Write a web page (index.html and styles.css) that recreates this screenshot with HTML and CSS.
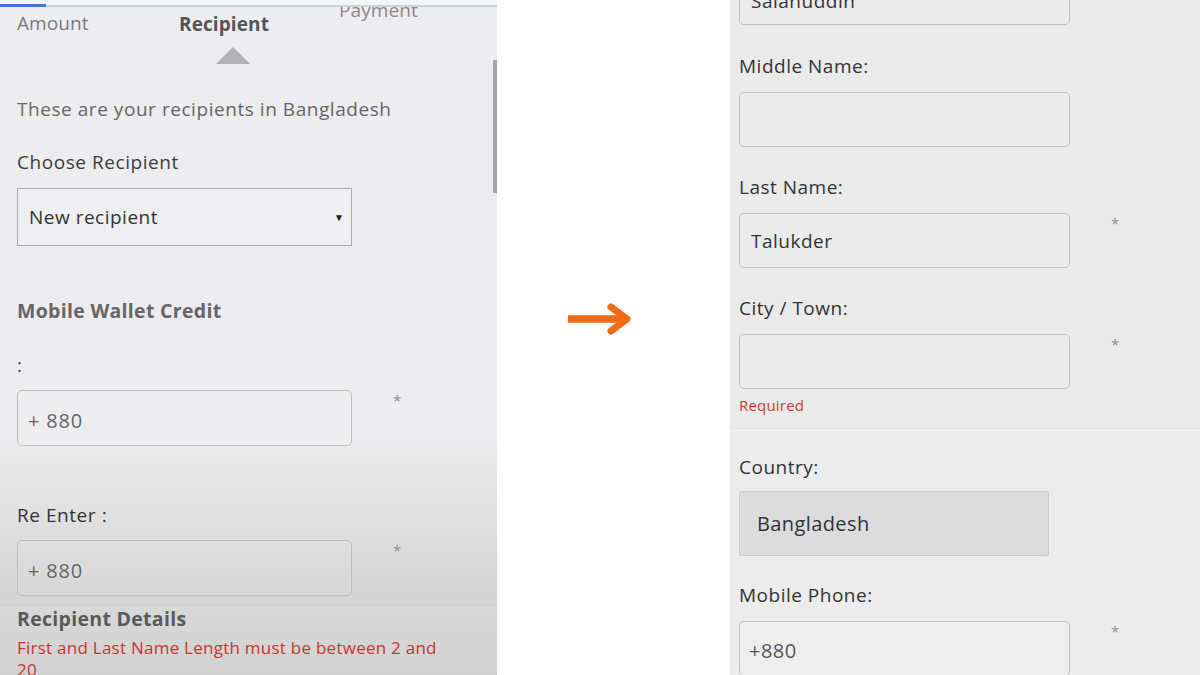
FILE: index.html
```html
<!DOCTYPE html>
<html lang="en">
<head>
<meta charset="utf-8">
<title>Recipient form</title>
<link rel="stylesheet" href="styles.css">
</head>
<body>
<div class="canvas">
  <section class="left">
    <div class="topbar"><span class="indicator"></span></div>
    <div class="tabs">
      <span class="tab tab-amount">Amount</span>
      <span class="tab tab-recipient">Recipient</span>
      <span class="tab tab-payment">Payment</span>
    </div>
    <div class="pointer-row"><span class="pointer"></span></div>
    <div class="scrollbar"></div>
    <div class="form-left">
      <p class="intro">These are your recipients in Bangladesh</p>
      <p class="label">Choose Recipient</p>
      <div class="select"><span>New recipient</span><span class="caret">▼</span></div>
      <p class="heading heading-wallet">Mobile Wallet Credit</p>
      <p class="label colon">:</p>
      <div class="field-row">
        <div class="input-l">+ 880</div><span class="star">*</span>
      </div>
      <p class="label reenter">Re Enter :</p>
      <div class="field-row">
        <div class="input-l">+ 880</div><span class="star">*</span>
      </div>
    </div>
    <div class="details">
      <p class="heading">Recipient Details</p>
      <p class="error-l">First and Last Name Length must be between 2 and 20</p>
    </div>
  </section>

  <div class="middle">
    <svg class="arrow" width="72" height="36" viewBox="0 0 72 36" aria-hidden="true">
      <path d="M5 18 H62" stroke="#f26a12" stroke-width="7.5" stroke-linecap="butt" fill="none"/>
      <path d="M48 6 L64 18 L48 30" stroke="#f26a12" stroke-width="7" stroke-linecap="round" stroke-linejoin="round" fill="none"/>
    </svg>
  </div>

  <section class="right">
    <div class="block-top">
      <div class="field-row r">
        <div class="input-r first"><span class="clip">Salahuddin</span></div>
      </div>
      <p class="label r">Middle Name:</p>
      <div class="field-row r">
        <div class="input-r"></div>
      </div>
      <p class="label r gap">Last Name:</p>
      <div class="field-row r">
        <div class="input-r">Talukder</div><span class="star r">*</span>
      </div>
      <p class="label r gap">City / Town:</p>
      <div class="field-row r">
        <div class="input-r"></div><span class="star r">*</span>
      </div>
      <p class="error-r">Required</p>
    </div>
    <div class="block-bottom">
      <p class="label r">Country:</p>
      <div class="country">Bangladesh</div>
      <p class="label r gap2">Mobile Phone:</p>
      <div class="field-row r">
        <div class="input-r phone">+880</div><span class="star r">*</span>
      </div>
    </div>
  </section>
</div>
</body>
</html>
```

FILE: styles.css
```css
* { box-sizing: border-box; }
html, body { margin: 0; padding: 0; background: #ffffff; }
body { font-family: "Open Sans", "Liberation Sans", sans-serif; }
p { margin: 0; }

.canvas {
  display: flex;
  width: 1200px;
  height: 675px;
  overflow: hidden;
}

/* ---------- left phone capture ---------- */
.left {
  position: relative;
  width: 497px;
  height: 675px;
  overflow: hidden;
  background: linear-gradient(#edecee 0, #ecebed 440px, #d4d4d4 600px, #d2d2d2 607px);
  display: flex;
  flex-direction: column;
  flex-shrink: 0;
}
.left > * { flex-shrink: 0; }
.topbar {
  height: 7px;
  background: #f3f5f9;
  border-bottom: 2px solid #cbd2dc;
  position: relative;
  z-index: 1;
}
.indicator {
  display: block;
  width: 46px;
  height: 3px;
  background: #3b78d8;
  margin-top: 4px;
}
.tabs {
  display: flex;
  height: 32px;
  align-items: center;
  padding-left: 17px;
  font-size: 19px;
  letter-spacing: 0.1px;
}
.tab { display: block; line-height: 24px; }
.tab-amount { width: 162px; color: #7a7a7a; }
.tab-recipient { width: 160px; color: #555555; font-weight: 700; margin-top: 2px; }
.tab-payment { color: #8a8a8a; margin-top: -26px; }
.pointer-row { height: 25px; display: flex; padding-left: 216px; align-items: flex-end; }
.pointer {
  width: 0; height: 0;
  border-left: 17.5px solid transparent;
  border-right: 17.5px solid transparent;
  border-bottom: 17px solid #b2b2b6;
}
.scrollbar {
  position: absolute;
  right: 0;
  top: 60px;
  width: 4px;
  height: 133px;
  background: #a3a3a3;
}
.form-left { padding-left: 17px; }
.intro { font-size: 19px; letter-spacing: 0.55px; color: #666666; line-height: 26px; margin-top: 32px; }
.label { font-size: 19px; letter-spacing: 0.55px; color: #3c3c3c; line-height: 26px; }
.form-left .label { margin-top: 27px; }
.select {
  margin-top: 13px;
  width: 335px;
  height: 58px;
  border: 1.5px solid #aaaaaa;
  background: #efeef0;
  display: flex;
  align-items: center;
  justify-content: space-between;
  padding: 0 7px 0 11px;
  font-size: 19px;
  letter-spacing: 0.5px;
  color: #333333;
}
.caret { font-size: 10px; color: #222; letter-spacing: 0; }
.heading { font-size: 19.5px; letter-spacing: 0.3px; font-weight: 700; color: #666666; line-height: 26px; }
.heading-wallet { margin-top: 52px; }
.form-left .colon { margin-top: 28px; color: #444; }
.field-row { display: flex; align-items: flex-start; margin-top: 12px; }
.input-l {
  width: 335px;
  height: 56px;
  border: 1.5px solid #bdbdbd;
  border-radius: 5px;
  background: rgba(255,255,255,0.06);
  display: flex;
  align-items: center;
  padding-left: 10px;
  padding-top: 5px;
  font-size: 20px;
  letter-spacing: 0.8px;
  color: #666666;
}
.star {
  margin-left: 41px;
  margin-top: 0px;
  font-size: 15px;
  color: #8f8f9e;
}
.form-left .reenter { margin-top: 56px; color: #333; }
.details {
  margin-top: 11px;
  flex: 1 0 auto;
  background: linear-gradient(#d8d8d8, #d1d1d1);
  padding-left: 17px;
  padding-top: 0;
}
.details .heading { color: #5a5a5a; line-height: 24px; }
.error-l {
  font-size: 17px;
  letter-spacing: 0.25px;
  color: #c9352e;
  line-height: 22px;
  margin-top: 6px;
  width: 428px;
}

/* ---------- middle arrow ---------- */
.middle {
  width: 233px;
  flex-shrink: 0;
  display: flex;
  align-items: flex-start;
  padding-left: 66px;
  padding-top: 301px;
}

/* ---------- right phone capture ---------- */
.right {
  width: 470px;
  height: 675px;
  flex-shrink: 0;
  overflow: hidden;
  display: flex;
  flex-direction: column;
}
.right > * { flex-shrink: 0; }
.block-top {
  background: #eaeaea;
  padding-left: 9px;
  height: 431px;
  border-bottom: 1.5px solid #f6f6f6;
}
.block-bottom {
  background: #ececec;
  padding-left: 9px;
  padding-top: 23px;
  flex: 1 0 auto;
}
.field-row.r { margin-top: 13px; }
.input-r {
  width: 331px;
  height: 55px;
  border: 1.5px solid #c2c2c2;
  border-radius: 5px;
  background: #ebebeb;
  display: flex;
  align-items: center;
  padding-left: 11px;
  font-size: 19px;
  letter-spacing: 0.5px;
  color: #333333;
  overflow: hidden;
}
.input-r.first { margin-top: -43px; align-items: flex-start; }
.clip { display: block; margin-top: 17px; }
.label.r { color: #333333; font-size: 19px; letter-spacing: 0.5px; }
.block-top > .label.r { margin-top: 28px; }
.block-top > .label.r.gap { margin-top: 27px; }
.star.r { margin-left: 41px; margin-top: 0px; }
.error-r { font-size: 15px; letter-spacing: 0.2px; color: #cc3b36; line-height: 20px; margin-top: 6px; }
.country {
  margin-top: 11px;
  width: 310px;
  height: 65px;
  background: #dcdcdc;
  border: 1.5px solid #cbcbcb;
  border-radius: 2px;
  display: flex;
  align-items: center;
  padding-left: 17px;
  font-size: 20px;
  letter-spacing: 0.4px;
  color: #333333;
}
.block-bottom .gap2 { margin-top: 26px; }
.input-r.phone { color: #555555; padding-left: 9px; padding-top: 4px; background: #eeeeee; font-size: 20px; }
```
